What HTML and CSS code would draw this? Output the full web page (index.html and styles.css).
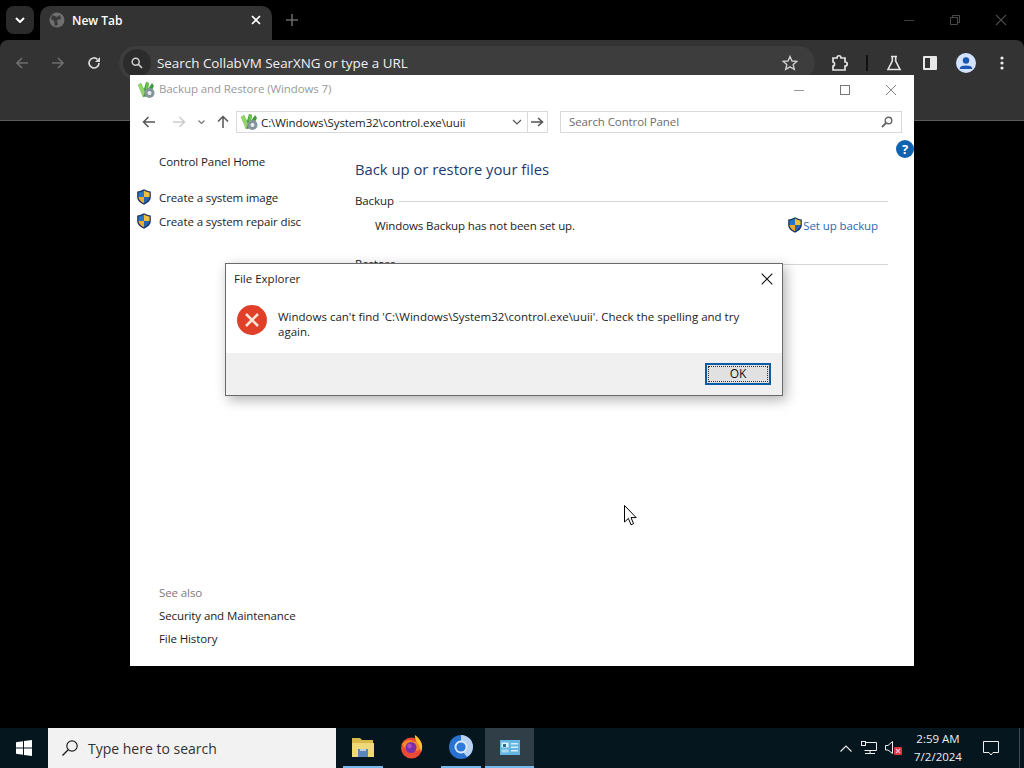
FILE: index.html
```html
<!DOCTYPE html>
<html lang="en">
<head>
    <meta charset="UTF-8">
    <meta name="viewport" content="width=device-width, initial-scale=1.0">
    <title>Backup and Restore (Windows 7)</title>
    <link rel="stylesheet" href="styles.css">
</head>
<body>
    <svg class="defs" width="0" height="0">
        <symbol id="shield" viewBox="0 0 16 16">
            <path d="M8 .3 C6 1.6 3.6 2.3 1.2 2.4 V8 C1.2 11.6 4.4 14.2 8 15.7 C11.6 14.2 14.8 11.6 14.8 8 V2.4 C12.4 2.3 10 1.6 8 .3Z" fill="#16305c"/>
            <path d="M8 1.6 V8 H2.4 V3.4 C4.5 3.3 6.4 2.7 8 1.6Z" fill="#2a74c4"/>
            <path d="M8 1.6 C9.6 2.7 11.5 3.3 13.6 3.4 V8 H8Z" fill="#eebf3a"/>
            <path d="M8 8 V14.3 C5.2 13 2.6 11 2.4 8Z" fill="#eaae2c"/>
            <path d="M8 8 H13.6 C13.4 11 10.8 13 8 14.3Z" fill="#2565ae"/>
        </symbol>
        <symbol id="cpanel" viewBox="0 0 18 18">
            <path d="M1 4 L4 2 L7 8 L9 1 L12 2 L11 8 L15 2 L17 5 L12 15 L6 16Z" fill="#3f9c3a"/>
            <path d="M1 4 L4 2 L8 11 L6 16Z" fill="#93d668"/>
            <path d="M9 1 L12 2 L10.5 9 L8.5 8Z" fill="#6cc04e"/>
            <circle cx="12.5" cy="12" r="5" fill="#87949c"/>
            <circle cx="12.5" cy="12" r="2" fill="#e8eef0"/>
        </symbol>
    </svg>

    <header class="browser">
        <div class="tabstrip">
            <button class="tab-search">
                <svg width="10" height="6" viewBox="0 0 10 6"><path d="M1 1 L5 5 L9 1" fill="none" stroke="#fff" stroke-width="2"/></svg>
            </button>
            <div class="tab">
                <svg width="16" height="16" viewBox="0 0 16 16"><circle cx="8" cy="8" r="7.5" fill="#6f6f6f"/><path d="M3 3 L8 5 L11 3 L12 7 L8 8 L9 13 L6 14 L5 9 L2 7Z" fill="#3a3a3a"/></svg>
                <span class="tab-title">New Tab</span>
                <svg width="10" height="10" viewBox="0 0 10 10"><path d="M1 1 L9 9 M9 1 L1 9" stroke="#fff" stroke-width="1.7"/></svg>
            </div>
            <svg class="new-tab" width="12" height="12" viewBox="0 0 12 12"><path d="M6 0 V12 M0 6 H12" stroke="#666" stroke-width="1.6"/></svg>
            <div class="caption-btns">
                <svg width="12" height="12" viewBox="0 0 12 12"><path d="M1 6.5 H11" stroke="#3c3c3c"/></svg>
                <svg width="12" height="12" viewBox="0 0 12 12"><path d="M1.5 3.5 H8.5 V10.5 H1.5Z M3.5 3.5 V1.5 H10.5 V8.5 H8.5" fill="none" stroke="#4a4a4a"/></svg>
                <svg width="12" height="12" viewBox="0 0 12 12"><path d="M1 1 L11 11 M11 1 L1 11" stroke="#4a4a4a" stroke-width="1.1"/></svg>
            </div>
        </div>
        <div class="toolbar">
            <svg class="tool dim" width="14" height="14" viewBox="0 0 14 14"><path d="M13 7 H2 M7 2 L2 7 L7 12" fill="none" stroke="#6d6d6d" stroke-width="1.7"/></svg>
            <svg class="tool dim" width="14" height="14" viewBox="0 0 14 14"><path d="M1 7 H12 M7 2 L12 7 L7 12" fill="none" stroke="#6d6d6d" stroke-width="1.7"/></svg>
            <svg class="tool" width="14" height="14" viewBox="0 0 14 14"><path d="M12 7 A5 5 0 1 1 10.4 3.3" fill="none" stroke="#d8d8d8" stroke-width="1.7"/><path d="M13 1 V6 H8Z" fill="#d8d8d8"/></svg>
            <div class="omnibox">
                <span class="omni-icon">
                    <svg width="12" height="12" viewBox="0 0 12 12"><circle cx="4.7" cy="4.7" r="3.5" fill="none" stroke="#d0d0d0" stroke-width="1.5"/><path d="M7.4 7.4 L11 11" stroke="#d0d0d0" stroke-width="1.7"/></svg>
                </span>
                <span class="omni-text">Search CollabVM SearXNG or type a URL</span>
                <svg class="omni-star" width="16" height="16" viewBox="0 0 16 16"><path d="M8 1.5 L10 6 L14.8 6.4 L11.2 9.6 L12.3 14.4 L8 11.9 L3.7 14.4 L4.8 9.6 L1.2 6.4 L6 6Z" fill="none" stroke="#cfcfcf" stroke-width="1.4"/></svg>
            </div>
            <div class="tool-icons">
                <svg width="18" height="18" viewBox="0 0 18 18"><path d="M2 4 H6 C6 1 10 1 10 4 H14 V8 C17 8 17 12 14 12 V16 H2 V12 C4 12 4 8 2 8Z" fill="none" stroke="#e4e4e4" stroke-width="1.7"/></svg>
                <span class="tool-sep"></span>
                <svg width="16" height="16" viewBox="0 0 16 16"><path d="M5 1.5 H11 M6.3 1.5 V6 L2 14.5 H14 L9.7 6 V1.5" fill="none" stroke="#e4e4e4" stroke-width="1.6"/></svg>
                <svg width="14" height="14" viewBox="0 0 14 14"><rect x="0" y="0" width="14" height="14" rx="1" fill="#e8e8e8"/><rect x="2" y="2" width="5" height="10" fill="#333"/></svg>
                <svg width="20" height="20" viewBox="0 0 20 20"><circle cx="10" cy="10" r="10" fill="#d3e3fd"/><circle cx="10" cy="7.5" r="3.2" fill="#1a56b0"/><path d="M3.8 15 C5 11.8 15 11.8 16.2 15 V16 H3.8Z" fill="#1a56b0"/></svg>
                <svg width="4" height="14" viewBox="0 0 4 14"><circle cx="2" cy="2" r="1.6" fill="#eee"/><circle cx="2" cy="7" r="1.6" fill="#eee"/><circle cx="2" cy="12" r="1.6" fill="#eee"/></svg>
            </div>
        </div>
    </header>

    <main class="desktop"></main>

    <footer class="taskbar">
        <div class="start">
            <svg width="16" height="16" viewBox="0 0 16 16"><path d="M0 2.2 L7 1.2 V7.5 H0Z M8 1 L16 0 V7.5 H8Z M0 8.5 H7 V14.8 L0 13.8Z M8 8.5 H16 V16 L8 15Z" fill="#fff"/></svg>
        </div>
        <div class="task-search">
            <svg width="18" height="18" viewBox="0 0 18 18"><circle cx="11" cy="7" r="5.2" fill="none" stroke="#222" stroke-width="1.2"/><path d="M7.2 10.8 L1.5 16.5" stroke="#222" stroke-width="1.4"/></svg>
            <span>Type here to search</span>
        </div>
        <div class="task-item running">
            <svg width="22" height="19" viewBox="0 0 22 19"><path d="M0 0 H8 L10 2 H21 V19 H0Z" fill="#d9b94a"/><path d="M0 5 H22 V19 H0Z" fill="#efd878"/><rect x="6" y="11" width="10" height="8" fill="#5a86b8"/><rect x="8" y="11" width="6" height="2" fill="#b9cfe0"/></svg>
        </div>
        <div class="task-item">
            <svg width="23" height="24" viewBox="0 0 23 24"><circle cx="11.5" cy="13" r="10.5" fill="#ec4a34"/><path d="M2 9 C5 16 16 20 22 12 C22 8 20 5 17 3 C19 8 14 7 11 5 C7 5 4 6 2 9Z" fill="#f48a24"/><path d="M15 0 C21 4 24 11 21 17 C20 9 14 6 15 0Z" fill="#ffc02e"/><circle cx="11" cy="12.5" r="5.5" fill="#7d2fa8"/><circle cx="9.5" cy="11" r="2.2" fill="#b04ac0"/></svg>
        </div>
        <div class="task-item running">
            <svg width="24" height="24" viewBox="0 0 24 24"><circle cx="12" cy="12" r="12" fill="#2a72cf"/><path d="M12 0 A12 12 0 0 1 24 12 A12 12 0 0 1 18 22 L14 17 A6 6 0 0 0 12 6Z" fill="#b9d2f2"/><circle cx="12" cy="12" r="6.5" fill="#dbe8f7"/><circle cx="12" cy="12" r="4.6" fill="#2f7ad8"/></svg>
        </div>
        <div class="task-item running active">
            <svg width="20" height="15" viewBox="0 0 20 15"><rect width="20" height="15" fill="#62b5e0"/><rect x="1.5" y="2.5" width="7" height="5" fill="#dff1f8"/><rect x="3" y="4" width="3" height="3" fill="#2c6b8e"/><rect x="11" y="3" width="7" height="1.5" fill="#d6edf8"/><rect x="11" y="6.5" width="7" height="1.5" fill="#d6edf8"/><rect x="1.5" y="9.5" width="7" height="3" fill="#a9d8ef"/><rect x="11" y="10" width="7" height="1.5" fill="#d6edf8"/></svg>
        </div>
        <div class="tray">
            <svg width="12" height="7" viewBox="0 0 12 7"><path d="M.5 6.5 L6 1 L11.5 6.5" fill="none" stroke="#eee" stroke-width="1.1"/></svg>
            <svg width="16" height="14" viewBox="0 0 16 14"><path d="M3.5 1.5 H15.5 V9.5 H3.5 M9 9.5 V12.5 M4 12.5 H14" fill="none" stroke="#eee"/><rect x=".5" y=".5" width="4" height="4" fill="#0a1a26" stroke="#eee"/></svg>
            <svg width="17" height="16" viewBox="0 0 17 16"><path d="M.5 5.5 H3 L7.5 1.5 V13.5 L3 10 H.5Z" fill="none" stroke="#eee"/><rect x="9" y="7" width="8" height="8" rx="1" fill="#d8383c"/><path d="M11 9 L15 13 M15 9 L11 13" stroke="#fbd" stroke-width="1.1"/></svg>
            <div class="clock">
                <span>2:59 AM</span>
                <span>7/2/2024</span>
            </div>
            <svg class="notify" width="16" height="15" viewBox="0 0 16 15"><path d="M.5 .5 H15.5 V11.5 H10 L8 14 L6 11.5 H.5Z" fill="none" stroke="#eee"/></svg>
            <span class="show-desktop"></span>
        </div>
    </footer>

    <section class="explorer">
        <div class="win-title">
            <svg width="18" height="18"><use href="#cpanel"/></svg>
            <span class="win-name">Backup and Restore (Windows 7)</span>
            <div class="win-btns">
                <svg width="12" height="12" viewBox="0 0 12 12"><path d="M1 6.5 H11" stroke="#999"/></svg>
                <svg width="12" height="12" viewBox="0 0 12 12"><rect x="1.5" y="1.5" width="9" height="9" fill="none" stroke="#777"/></svg>
                <svg width="12" height="12" viewBox="0 0 12 12"><path d="M1 1 L11 11 M11 1 L1 11" stroke="#888"/></svg>
            </div>
        </div>
        <div class="nav-row">
            <svg width="14" height="12" viewBox="0 0 14 12"><path d="M13 6 H2 M6.5 1 L1.5 6 L6.5 11" fill="none" stroke="#555" stroke-width="1.5"/></svg>
            <svg class="nav-fwd" width="14" height="12" viewBox="0 0 14 12"><path d="M1 6 H12 M7.5 1 L12.5 6 L7.5 11" fill="none" stroke="#ccc" stroke-width="1.5"/></svg>
            <svg class="nav-drop" width="7" height="5" viewBox="0 0 7 5"><path d="M.5 .5 L3.5 3.5 L6.5 .5" fill="none" stroke="#777" stroke-width="1.2"/></svg>
            <svg class="nav-up" width="12" height="14" viewBox="0 0 12 14"><path d="M6 13 V2 M1 6.5 L6 1.5 L11 6.5" fill="none" stroke="#555" stroke-width="1.5"/></svg>
            <div class="address">
                <svg width="18" height="18"><use href="#cpanel"/></svg>
                <span class="address-text">C:\Windows\System32\control.exe\uuii</span>
                <svg width="10" height="6" viewBox="0 0 10 6"><path d="M1 1 L5 5 L9 1" fill="none" stroke="#555" stroke-width="1.2"/></svg>
            </div>
            <div class="go-btn">
                <svg width="13" height="10" viewBox="0 0 13 10"><path d="M0 5 H11 M7 1 L11.5 5 L7 9" fill="none" stroke="#555" stroke-width="1.6"/></svg>
            </div>
            <div class="search-box">
                <span class="search-hint">Search Control Panel</span>
                <svg width="12" height="12" viewBox="0 0 12 12"><circle cx="7.5" cy="4.5" r="3.3" fill="none" stroke="#666" stroke-width="1.4"/><path d="M5 7 L1 11" stroke="#666" stroke-width="1.8"/></svg>
            </div>
        </div>
        <div class="help">?</div>
        <div class="cp-body">
            <aside class="sidebar">
                <div class="side-link first">Control Panel Home</div>
                <div class="side-tasks">
                    <div class="side-task"><svg width="16" height="16"><use href="#shield"/></svg><span>Create a system image</span></div>
                    <div class="side-task"><svg width="16" height="16"><use href="#shield"/></svg><span>Create a system repair disc</span></div>
                </div>
                <div class="see-also">
                    <div class="side-link muted">See also</div>
                    <div class="side-link">Security and Maintenance</div>
                    <div class="side-link">File History</div>
                </div>
            </aside>
            <div class="content">
                <h1>Back up or restore your files</h1>
                <div class="group-head"><span>Backup</span><i></i></div>
                <div class="backup-row">
                    <span>Windows Backup has not been set up.</span>
                    <span class="setup-link"><svg width="16" height="16"><use href="#shield"/></svg>Set up backup</span>
                </div>
                <div class="group-head restore"><span>Restore</span><i></i></div>
            </div>
        </div>
    </section>

    <section class="dialog">
        <div class="dlg-title">
            <span>File Explorer</span>
            <svg width="12" height="12" viewBox="0 0 12 12"><path d="M.7 .7 L11.3 11.3 M11.3 .7 L.7 11.3" stroke="#111" stroke-width="1.1"/></svg>
        </div>
        <div class="dlg-body">
            <svg width="30" height="30" viewBox="0 0 30 30"><circle cx="15" cy="15" r="15" fill="#e0402a"/><path d="M9 9 L21 21 M21 9 L9 21" stroke="#fde4d8" stroke-width="2.6"/></svg>
            <p>Windows can't find 'C:\Windows\System32\control.exe\uuii'. Check the spelling and try again.</p>
        </div>
        <div class="dlg-foot">
            <button class="ok-btn"><span>OK</span></button>
        </div>
    </section>

    <svg class="cursor" width="13" height="21" viewBox="0 0 13 21"><path d="M.5 .5 V17 L4.4 13.4 L7 19.8 L9.6 18.7 L7 12.6 H12.2Z" fill="#fff" stroke="#000"/></svg>
</body>
</html>
```

FILE: styles.css
```css
* { box-sizing: border-box; }

body {
    position: relative;
    display: flex;
    flex-direction: column;
    width: 1024px;
    height: 768px;
    margin: 0;
    overflow: hidden;
    background-color: #000;
    font-family: "Open Sans", "Noto Sans", sans-serif;
    font-size: 12px;
    color: #1c1c1c;
}
.defs { position: absolute; }

/* Chrome dahinter */
.browser { height: 121px; flex: none; }
.tabstrip {
    display: flex;
    align-items: flex-end;
    height: 40px;
    padding-left: 6px;
}
.tab-search {
    display: flex;
    align-items: center;
    justify-content: center;
    width: 28px;
    height: 28px;
    margin-bottom: 6px;
    border: none;
    border-radius: 8px;
    background-color: #2b2b2b;
}
.tab {
    display: flex;
    align-items: center;
    width: 232px;
    height: 34px;
    margin-left: 6px;
    padding: 0 11px 6px 9px;
    border-radius: 10px 10px 0 0;
    background-color: #333;
    color: #fff;
    font-size: 12px;
    font-weight: 600;
}
.tab-title { flex: 1; margin-left: 7px; }
.new-tab { margin: 0 0 14px 14px; }
.caption-btns {
    display: flex;
    gap: 34px;
    margin: 0 17px 14px auto;
}
.toolbar {
    display: flex;
    align-items: flex-start;
    height: 81px;
    padding: 6px 0 0 15px;
    border-bottom: 1px solid #5a5a5a;
    border-radius: 8px 8px 0 0;
    background-color: #333;
}
.tool { margin: 10px 22px 0 0; }
.tool + .omnibox { margin-left: -4px; }
.omnibox {
    display: flex;
    align-items: center;
    flex: none;
    width: 696px;
    height: 34px;
    padding-right: 17px;
    border-radius: 17px;
    background-color: #3d3d3d;
}
.omni-icon {
    display: flex;
    align-items: center;
    justify-content: center;
    width: 28px;
    height: 28px;
    margin-left: 4px;
    border-radius: 50%;
    background-color: #2c2c2c;
}
.omni-text {
    flex: 1;
    margin-left: 6px;
    color: #f0f0f0;
    font-size: 13.4px;
}
.tool-icons {
    display: grid;
    grid-template-columns: 36px 18px 36px 36px 36px 36px;
    align-items: center;
    justify-items: center;
    height: 34px;
    margin-left: 7px;
}
.tool-sep { width: 2px; height: 16px; background-color: #111; }

.desktop { flex: 1; }

/* Taskleiste */
.taskbar {
    display: flex;
    flex: none;
    height: 40px;
    background-color: #06161f;
}
.start {
    display: flex;
    align-items: center;
    justify-content: center;
    width: 48px;
}
.task-search {
    display: flex;
    align-items: center;
    gap: 9px;
    width: 288px;
    margin-right: 2px;
    padding-left: 13px;
    background-color: #f2f2f2;
    color: #333;
    font-size: 14px;
}
.task-item {
    display: flex;
    align-items: center;
    justify-content: center;
    width: 49px;
    padding-bottom: 2px;
}
.running { background: linear-gradient(#76b9ed, #76b9ed) center bottom / 40px 2px no-repeat; }
.active { background: linear-gradient(#76b9ed, #76b9ed) center bottom / 100% 2px no-repeat, #2f3e47; }
.tray {
    display: flex;
    align-items: center;
    flex: 1;
    justify-content: flex-end;
    color: #eee;
}
.tray > svg:nth-child(1) { margin-right: 9px; }
.tray > svg:nth-child(2) { margin-right: 8px; }
.clock {
    display: flex;
    flex-direction: column;
    align-items: center;
    gap: 2px;
    width: 64px;
    margin-left: 4px;
    font-size: 11.5px;
    line-height: 16px;
}
.notify { margin: 0 20px 0 13px; }
.show-desktop { width: 1px; height: 100%; margin-right: 4px; background-color: #445; }

/* Explorer-Fenster */
.explorer {
    position: absolute;
    left: 130px;
    top: 75px;
    display: flex;
    flex-direction: column;
    width: 784px;
    height: 591px;
    background-color: #fff;
    font-size: 11.5px;
    letter-spacing: -0.1px;
}
.win-title {
    display: flex;
    align-items: center;
    height: 29px;
    padding-left: 7px;
}
.win-name { margin-left: 4px; padding-bottom: 2px; color: #9a9a9a; }
.win-btns {
    display: flex;
    gap: 34px;
    margin: 0 17px 0 auto;
}
.nav-row {
    display: flex;
    align-items: center;
    height: 22px;
    margin-top: 7px;
    padding-left: 12px;
}
.nav-fwd { margin-left: 16px; }
.nav-drop { margin-left: 12px; }
.nav-up { margin-left: 12px; }
.address {
    display: flex;
    align-items: center;
    width: 292px;
    height: 22px;
    margin-left: 7px;
    padding: 0 5px 0 3px;
    border: 1px solid #d9d9d9;
    color: #222;
}
.address-text { flex: 1; margin-left: 3px; }
.go-btn {
    display: flex;
    align-items: center;
    justify-content: center;
    width: 20px;
    height: 22px;
    border: 1px solid #d9d9d9;
    border-left: none;
}
.search-box {
    display: flex;
    align-items: center;
    justify-content: space-between;
    width: 342px;
    height: 22px;
    margin-left: 12px;
    padding: 0 8px;
    border: 1px solid #d9d9d9;
    color: #6d6d6d;
}
.search-hint { padding-bottom: 2px; }
.help {
    position: absolute;
    left: 766px;
    top: 65px;
    width: 18px;
    height: 18px;
    border-radius: 50%;
    background-color: #0f63b0;
    color: #fff;
    font-size: 13px;
    font-weight: 700;
    line-height: 18px;
    text-align: center;
}
.cp-body {
    display: flex;
    flex: 1;
}
.sidebar {
    display: flex;
    flex-direction: column;
    width: 225px;
    padding-bottom: 16px;
}
.side-link {
    height: 23px;
    padding-left: 29px;
    line-height: 23px;
}
.side-link.first { margin-top: 17px; }
.side-link.muted { color: #7a7a7a; }
.side-tasks { margin-top: 12px; }
.side-task {
    display: flex;
    align-items: center;
    gap: 7px;
    height: 24px;
    padding-left: 6px;
}
.see-also { margin-top: auto; }
.content { flex: 1; padding: 24px 26px 0 0; }
h1 {
    margin: 0;
    color: #1f3a70;
    font-size: 14.8px;
    font-weight: 400;
    line-height: 24px;
    letter-spacing: 0;
}
.group-head {
    display: flex;
    align-items: center;
    gap: 5px;
    height: 18px;
    margin-top: 10px;
}
.group-head i { flex: 1; height: 1px; margin-top: 2px; background-color: #d4d4d4; }
.backup-row {
    display: flex;
    align-items: center;
    justify-content: space-between;
    height: 24px;
    margin-top: 4px;
    padding: 0 10px 0 20px;
}
.setup-link {
    display: flex;
    align-items: center;
    color: #2a6ab0;
}
.group-head.restore { margin-top: 17px; }

/* Fehlerdialog */
.dialog {
    position: absolute;
    left: 225px;
    top: 263px;
    display: flex;
    flex-direction: column;
    width: 558px;
    height: 133px;
    border: 1px solid #6a6a6a;
    background-color: #fff;
    box-shadow: 3px 4px 12px rgba(0,0,0,0.3);
    font-size: 11.5px;
}
.dlg-title {
    display: flex;
    align-items: center;
    justify-content: space-between;
    height: 29px;
    padding: 0 9px 0 8px;
}
.dlg-body {
    display: flex;
    flex: 1;
    gap: 11px;
    padding: 12px 30px 0 11px;
}
.dlg-body svg { flex: none; }
.dlg-body p {
    margin: 4px 0 0;
    line-height: 15px;
}
.dlg-foot {
    display: flex;
    justify-content: flex-end;
    height: 42px;
    padding: 10px 11px 0 0;
    background-color: #f0f0f0;
}
.ok-btn {
    width: 66px;
    height: 22px;
    padding: 1px;
    border: 2px solid #0a5ca8;
    background-color: #e1e1e1;
    font-family: inherit;
    font-size: 12px;
    color: #111;
}
.ok-btn span {
    display: block;
    height: 100%;
    border: 1px dotted #333;
    line-height: 14px;
}

.cursor {
    position: absolute;
    left: 624px;
    top: 505px;
}
```
